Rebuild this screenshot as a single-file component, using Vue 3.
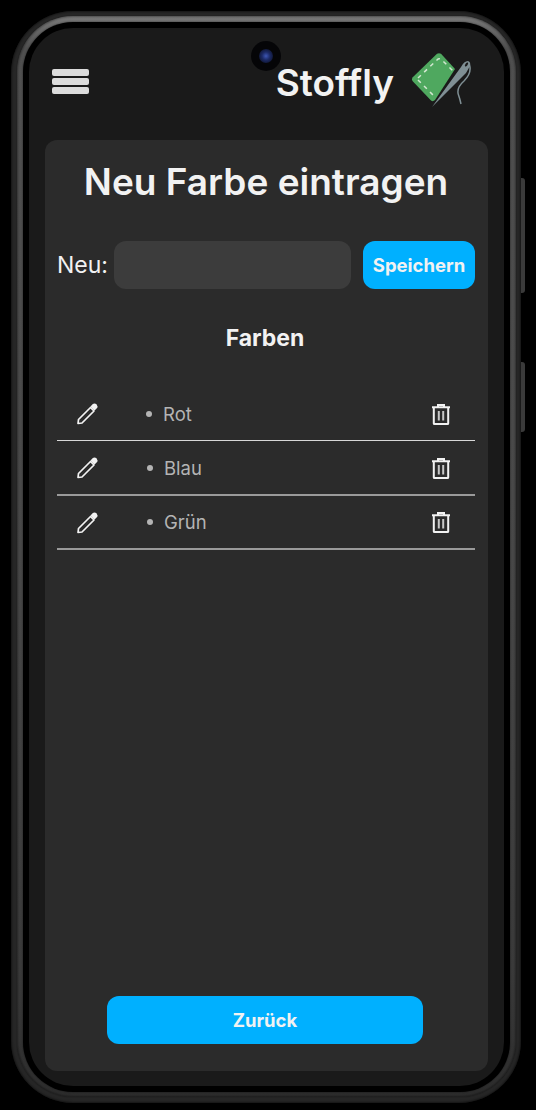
<template>
  <div class="phone">
    <div class="ring">
      <div class="bezel">
        <div class="screen">
          <header class="header">
            <button class="menu" aria-label="Menü"><span></span><span></span><span></span></button>
            <div class="brand">
              <span class="brand-name">Stoffly</span>
              <svg class="logo" width="62" height="58" viewBox="0 0 62 58">
                <path d="M2.500 26.500 L27 2.800 Q29 1.500 31 2.800 L45 18 L25 49 Q23 51 21 49.500 L2.500 30 Q1.300 28 2.500 26.500Z" fill="#4fa85f"/>
                <path d="M8 27 L28 8 Q30 7 32 9 L43 20 M8 29 L24 45" fill="none" stroke="#d4e8d2" stroke-width="1.500" stroke-dasharray="4 4.500"/>
                <path d="M22 56 L51 16 Q54 10 58 10 Q61 11 60 15 L56 22 Z" fill="#7f8f94"/>
                <ellipse cx="56.500" cy="13.500" rx="1.100" ry="2.400" transform="rotate(35 56.500 13.500)" fill="#1a1a1a"/>
                <path d="M59.500 14 Q62 22 54 30 Q46 37 48.500 44 Q50 48 51 53" fill="none" stroke="#7f8f94" stroke-width="1.500"/>
              </svg>
            </div>
          </header>

          <main class="card">
            <h1 class="title">Neu Farbe eintragen</h1>
            <div class="new-row">
              <label class="new-label" for="farbe">Neu:</label>
              <input id="farbe" class="new-input" v-model="neu" />
              <button class="btn save">Speichern</button>
            </div>
            <h2 class="subtitle">Farben</h2>
            <ul class="list">
              <li v-for="(farbe, i) in farben" :key="farbe" class="item" :class="{ heavy: i > 0 }">
                <svg class="icon edit" width="24" height="24" viewBox="0 0 24 24" fill="none" stroke="#f2f2f2" stroke-width="1.700" stroke-linejoin="round">
                  <path d="M3.500 17.500 L15.500 5.500 L19 9 L7 21 L3 21.500 Z"/>
                  <path d="M16.500 4.500 L18 3 Q19.500 1.800 21 3 Q22.300 4.500 21 6 L19.500 7.500 Z" fill="#f2f2f2"/>
                </svg>
                <span class="dot"></span>
                <span class="name">{{ farbe }}</span>
                <svg class="icon trash" width="18" height="21" viewBox="0 0 18 21" fill="none" stroke="#f2f2f2" stroke-width="2">
                  <path d="M0 3.200 H18 M6 3 V1 H12 V3"/>
                  <path d="M1.800 3.500 V19.500 Q1.800 20 2.500 20 H15.500 Q16.200 20 16.200 19.500 V3.500"/>
                  <path d="M6.800 7 V16.500 M11.200 7 V16.500" stroke="#c8c8c8"/>
                </svg>
              </li>
            </ul>
            <button class="btn back">Zurück</button>
          </main>
        </div>
      </div>
    </div>
    <div class="camera"><span></span></div>
    <span class="side-key power"></span>
    <span class="side-key volume"></span>
  </div>
</template>

<script setup>
import { ref } from 'vue'

const neu = ref('')
const farben = ['Rot', 'Blau', 'Grün']
</script>

<style>
html, body { margin: 0; background: #000; }
</style>

<style scoped>
.phone { position: relative; box-sizing: border-box; width: 510px; height: 1092px; margin: 11px 0 0 11px; padding: 5px 5px 6px 6px; border-radius: 62px; background: #262626; box-shadow: inset 0 0 2px 1px rgba(0, 0, 0, 0.45); }
.ring { box-sizing: border-box; height: 100%; padding: 6px 6px 5px; border-radius: 56px; background: linear-gradient(#787878 0, #747474 0.4%, #505050 3%, #484848 50%, #3a3a3a 88%, #303030 98%, #2c2c2c 100%); box-shadow: inset 0 0 2px 1px rgba(0, 0, 0, 0.35), 0 0 1px #0c0c0c; }
.bezel { box-sizing: border-box; height: 100%; padding: 6px; border-radius: 50px; background: #000; box-shadow: 0 0 2px rgba(0, 0, 0, 0.6); }
.screen { box-sizing: border-box; height: 100%; display: flex; flex-direction: column; padding: 0 16px 15px; border-radius: 44px; background: #1a1a1a; font-family: Inter, "Noto Sans", sans-serif; color: #f2f2f2; }

.header { height: 112px; flex: none; display: flex; align-items: center; justify-content: space-between; padding: 0 16px 6px 7px; box-sizing: border-box; }
.menu { width: 37px; height: 25px; padding: 0; border: 0; background: none; display: flex; flex-direction: column; gap: 2px; }
.menu span { display: block; width: 100%; height: 7px; border-radius: 2px; background: #dcdcdc; }
.brand { display: flex; align-items: center; gap: 16px; }
.brand-name { margin-top: 3px; font-size: 37px; font-weight: 600; line-height: 44px; }
.logo { display: block; margin-top: -2px; }

.card { flex: 1; min-height: 0; display: flex; flex-direction: column; padding: 0 13px 27px 12px; border-radius: 12px; background: #2b2b2b; }
.title { margin: 20px 0 0; font-size: 37px; font-weight: 600; line-height: 44px; text-align: center; }
.new-row { display: flex; align-items: center; margin-top: 37px; }
.new-label { width: 57px; flex: none; font-size: 23px; line-height: 28px; }
.new-input { box-sizing: border-box; width: 237px; height: 48px; flex: none; border: 0; border-radius: 12px; background: #3c3c3c; outline: none; color: #f2f2f2; }
.btn { border: 0; border-radius: 12px; background: #00b0ff; color: #f2f2f2; font-family: inherit; font-weight: 700; }
.save { width: 112px; height: 48px; margin-left: 12px; padding: 0; font-size: 18.500px; }
.subtitle { margin: 35px 2px 0 0; font-size: 23px; font-weight: 700; line-height: 28px; text-align: center; }
.list { flex: 1; margin: 34.500px 0 0; padding: 0; list-style: none; }
.item { box-sizing: border-box; height: 54.500px; display: flex; align-items: center; padding: 1px 25px 0 18px; border-bottom: 1px solid #d8d8d8; }
.item.heavy { border-bottom: 2px solid #9a9a9a; }
.icon { display: block; flex: none; }
.edit { margin-top: 1px; }
.trash { margin-top: 1px; }
.dot { width: 6px; height: 6px; margin-left: 47px; border-radius: 50%; background: #b4b4b4; }
.heavy .dot { margin-left: 48px; }
.name { flex: 1; margin-left: 11px; font-size: 18.500px; color: #b4b4b4; }
.back { width: 316px; height: 48px; flex: none; align-self: center; margin-right: 2px; padding: 0; font-size: 18.500px; }

.camera { position: absolute; left: 240px; top: 30px; width: 30px; height: 30px; border-radius: 50%; background: radial-gradient(#050507 78%, #101012 100%); display: flex; align-items: center; justify-content: center; }
.camera span { width: 14px; height: 14px; border-radius: 50%; background: radial-gradient(#3d56b4 0, #1c2a66 40%, #070912 100%); }
.side-key { position: absolute; right: -4px; width: 4px; border-radius: 0 3px 3px 0; background: #3a3a3a; }
.power { top: 167px; height: 115px; }
.volume { top: 351px; height: 70px; }
</style>
